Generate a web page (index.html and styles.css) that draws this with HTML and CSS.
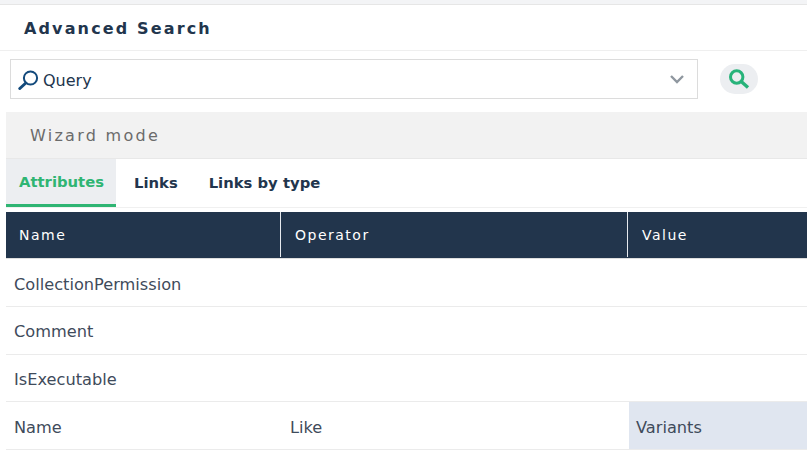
FILE: index.html
```html
<!DOCTYPE html>
<html lang="en">
<head>
<meta charset="utf-8">
<title>Advanced Search</title>
<link rel="stylesheet" href="styles.css">
</head>
<body>
<div class="topband"></div>
<header class="title"><h1>Advanced Search</h1></header>
<div class="searchrow">
  <div class="query">
    <svg class="qicon" width="22" height="22" viewBox="0 0 22 22"><circle cx="12.5" cy="10" r="6.6" fill="none" stroke="#134a7c" stroke-width="2"/><path d="M7.8 15 L1.8 20.5" stroke="#134a7c" stroke-width="3" stroke-linecap="round"/></svg>
    <span class="qtext">Query</span>
    <svg class="chev" width="16" height="10" viewBox="0 0 16 10"><path d="M2 2 L8 8 L14 2" fill="none" stroke="#8f979f" stroke-width="2.4"/></svg>
  </div>
  <button class="go" type="button">
    <svg width="22" height="22" viewBox="0 0 22 22"><circle cx="8.7" cy="9" r="6.2" fill="none" stroke="#27b37a" stroke-width="3"/><path d="M13.2 13.5 L20 19.5" stroke="#27b37a" stroke-width="3.4"/></svg>
  </button>
</div>
<div class="main">
  <div class="wizard">Wizard mode</div>
  <nav class="tabs">
    <a class="tab active">Attributes</a>
    <a class="tab">Links</a>
    <a class="tab">Links by type</a>
  </nav>
  <div class="grid">
    <div class="row head"><div class="c1">Name</div><div class="c2">Operator</div><div class="c3">Value</div></div>
    <div class="row"><div class="c1">CollectionPermission</div><div class="c2"></div><div class="c3"></div></div>
    <div class="row"><div class="c1">Comment</div><div class="c2"></div><div class="c3"></div></div>
    <div class="row"><div class="c1">IsExecutable</div><div class="c2"></div><div class="c3"></div></div>
    <div class="row"><div class="c1">Name</div><div class="c2">Like</div><div class="c3 filled">Variants</div></div>
    <div class="row"><div class="c1">ObjectModel</div><div class="c2"></div><div class="c3"></div></div>
  </div>
</div>
</body>
</html>
```
FILE: styles.css
```css
html, body { margin: 0; padding: 0; height: 468px; overflow: hidden; background: #fff; }
body { font-family: "DejaVu Sans", sans-serif; color: #3f4b5b; font-size: 16.2px; }
.topband { height: 4px; background: #f3f4f6; border-bottom: 1px solid #e6e6e6; }
.title { height: 46px; box-sizing: border-box; border-bottom: 1px solid #efefef; display: flex; align-items: center; padding: 1px 0 0 24px; }
.title h1 { margin: 0; font-size: 16px; font-weight: 700; letter-spacing: 2.14px; color: #22354d; }
.searchrow { display: flex; align-items: center; padding: 8px 0 0 10px; height: 40px; }
.query { width: 686px; height: 38px; border: 1px solid #dcdcdc; display: flex; align-items: center; }
.qicon { margin-left: 7px; flex: none; }
.qtext { margin-left: 3px; padding-top: 2px; font-size: 16px; color: #22354d; flex: 1; }
.chev { margin-right: 12px; }
.go { width: 38px; height: 30px; margin-left: 22px; border: 0; border-radius: 15px; background: #eceef1; padding: 0; display: flex; align-items: center; justify-content: center; }
.main { padding: 13px 0 0 6px; }
.wizard { height: 46px; background: #f2f2f2; border-bottom: 1px solid #e8e8e8; display: flex; align-items: center; padding-left: 24px; font-size: 16px; letter-spacing: 2.27px; color: #6b6b6b; }
.tabs { display: flex; height: 48px; border-bottom: 1px solid #f0f0f0; }
.tab { display: flex; align-items: center; padding: 0 15px 2px 16px; font-weight: 700; font-size: 14.8px; color: #22354d; }
.tab.active { width: 110px; box-sizing: border-box; padding: 0 0 0 13px; background: #eceef1; color: #2fb573; border-bottom: 3px solid #2fb573; }
.tab.active + .tab { padding-left: 18px; }
.grid { margin-top: 4px; }
.row { display: grid; grid-template-columns: 274px 347px 1fr; height: 47.7px; border-bottom: 1px solid #ebebeb; box-sizing: border-box; align-items: stretch; }
.row > div { display: flex; align-items: center; padding: 3px 0 0 8px; }
.row .c2 { padding-left: 10px; }
.row .filled { background: #e0e6f0; margin-left: 2px; padding-left: 7px; }
.row.head { height: 47.2px; background: #22354c; color: #fff; font-size: 14px; letter-spacing: 1.5px; border-bottom: 1px solid #dedede; }
.row.head > div { padding: 0 0 0 13px; }
.row.head .c2, .row.head .c3 { border-left: 1px solid #e6e9ee; margin-bottom: 1px; padding-left: 14px; }
```
